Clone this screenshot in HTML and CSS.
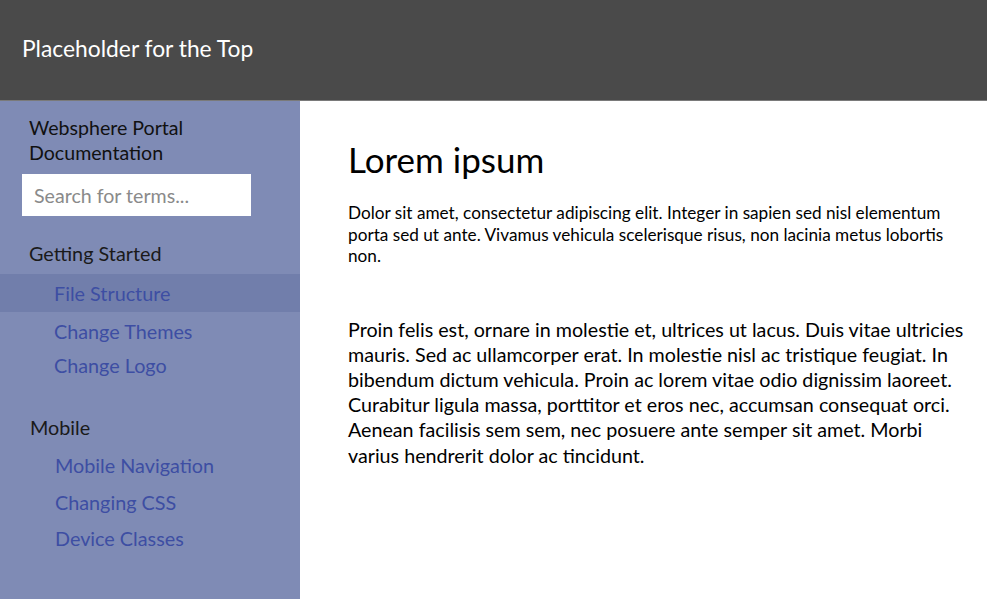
FILE: index.html
```html
<!DOCTYPE html>
<html lang="en">
<head>
<meta charset="utf-8">
<title>Websphere Portal Documentation</title>
<link rel="stylesheet" href="styles.css">
</head>
<body>
<header class="topbar">
  <div class="topbar-title">Placeholder for the Top</div>
</header>
<div class="layout">
  <nav class="sidebar">
    <div class="site-title">Websphere Portal<br>Documentation</div>
    <input class="search" type="text" placeholder="Search for terms...">
    <div class="section section-first">
      <div class="section-title">Getting Started</div>
      <a class="nav-link active" href="#">File Structure</a>
      <a class="nav-link" href="#">Change Themes</a>
      <a class="nav-link" href="#">Change Logo</a>
    </div>
    <div class="section section-mobile">
      <div class="section-title">Mobile</div>
      <a class="nav-link wide" href="#">Mobile Navigation</a>
      <a class="nav-link wide" href="#">Changing CSS</a>
      <a class="nav-link wide" href="#">Device Classes</a>
    </div>
  </nav>
  <main class="content">
    <h1 class="heading">Lorem ipsum</h1>
    <p class="lead">Dolor sit amet, consectetur adipiscing elit. Integer in sapien sed nisl elementum<br>porta sed ut ante. Vivamus vehicula scelerisque risus, non lacinia metus lobortis<br>non.</p>
    <p class="body-text">Proin felis est, ornare in molestie et, ultrices ut lacus. Duis vitae ultricies<br>mauris. Sed ac ullamcorper erat. In molestie nisl ac tristique feugiat. In<br>bibendum dictum vehicula. Proin ac lorem vitae odio dignissim laoreet.<br>Curabitur ligula massa, porttitor et eros nec, accumsan consequat orci.<br>Aenean facilisis sem sem, nec posuere ante semper sit amet. Morbi<br>varius hendrerit dolor ac tincidunt.</p>
  </main>
</div>
</body>
</html>
```
FILE: styles.css
```css
html, body {
  margin: 0;
  padding: 0;
}
body {
  width: 987px;
  height: 599px;
  overflow: hidden;
  font-family: "Lato", "Open Sans", sans-serif;
  background: #ffffff;
}
.topbar {
  height: 100px;
  background: #4a4a4a;
  border-bottom: 1px solid #7a7a7a;
  display: flex;
  align-items: center;
  padding-left: 22px;
}
.topbar-title {
  color: #ffffff;
  font-size: 22.8px;
  margin-top: -4px;
}
.layout {
  display: flex;
  height: 498px;
}
.sidebar {
  width: 300px;
  flex: none;
  background: #7f8bb5;
  padding-top: 14px;
  box-sizing: border-box;
  display: flex;
  flex-direction: column;
}
.site-title {
  font-size: 19.6px;
  line-height: 25px;
  color: #111111;
  padding-left: 29px;
}
.search {
  margin: 9px 0 0 22px;
  width: 229px;
  height: 42px;
  box-sizing: border-box;
  border: none;
  outline: none;
  padding: 0 12px;
  font-family: inherit;
  font-size: 19.6px;
  color: #555555;
  background: #ffffff;
}
.search::placeholder {
  color: #8a8a8a;
}
.section {
  display: flex;
  flex-direction: column;
}
.section-first {
  margin-top: 25px;
}
.section-mobile {
  margin-top: 33px;
}
.section-title {
  font-size: 19.8px;
  line-height: 25px;
  color: #1a1a1a;
  padding-left: 29px;
  margin-bottom: 8px;
}
.nav-link {
  display: block;
  font-size: 19.8px;
  line-height: 34px;
  padding-left: 54px;
  color: #3d4ea3;
  text-decoration: none;
}
.nav-link.active {
  line-height: 38px;
  background: #717eab;
  margin-bottom: 2px;
}
.nav-link.wide {
  line-height: 36.5px;
  padding-left: 55px;
}
.section-mobile .section-title {
  padding-left: 30px;
  margin-bottom: 7px;
}
.content {
  flex: 1;
  padding: 0 0 0 48px;
  color: #000000;
}
.heading {
  margin: 37px 0 0;
  font-size: 35px;
  font-weight: 400;
  line-height: 42px;
}
.lead {
  margin: 22px 0 0;
  font-size: 17.2px;
  line-height: 21.5px;
  white-space: nowrap;
}
.body-text {
  margin: 50px 0 0;
  font-size: 19.7px;
  line-height: 25.2px;
  white-space: nowrap;
}
```
